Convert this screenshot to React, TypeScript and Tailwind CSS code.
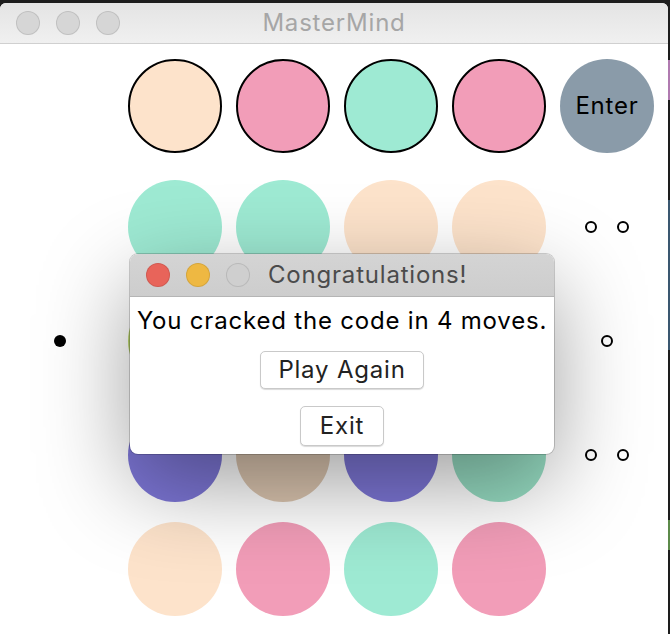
const PEACH = "bg-[#fde3cb]";
const PINK = "bg-[#f29db8]";
const MINT = "bg-[#9eead3]";

type Row = {
  colors: string[];
  pegs: number;
  current?: boolean;
};

const rows: Row[] = [
  { colors: [MINT, MINT, PEACH, PEACH], pegs: 2 },
  { colors: ["bg-[#b9d46c]", PINK, MINT, PEACH], pegs: 1, current: true },
  { colors: ["bg-[#7d76d6]", "bg-[#dcc6b0]", "bg-[#7d76d6]", "bg-[#96dcc2]"], pegs: 2 },
  { colors: [PEACH, PINK, MINT, PINK], pegs: 0 },
];

function TrafficLights({ colors }: { colors: string[] }) {
  return (
    <div className="flex items-center gap-4">
      {colors.map((c, i) => (
        <span
          key={i}
          className={`block w-6 h-6 rounded-full border border-black/10 ${c}`}
        />
      ))}
    </div>
  );
}

function Peg() {
  return <span className="block w-3 h-3 rounded-full border-2 border-black bg-white" />;
}

export default function App() {
  return (
    <div className="relative w-[670px] h-[634px] bg-[#1d1d1d] overflow-hidden font-['Inter','Liberation_Sans',sans-serif] tracking-[0.8px]">
      {/* editor marks behind the window */}
      <div className="absolute right-0 top-[60px] w-[2px] h-[40px] bg-[#b07ab0]" />
      <div className="absolute right-0 top-[200px] w-[2px] h-[150px] bg-[#4f7fa8]/60" />
      <div className="absolute right-0 top-[520px] w-[2px] h-[30px] bg-[#5c8a4a]" />

      <div className="mt-[3px] w-[668px] h-[631px] bg-white rounded-t-[6px] overflow-hidden flex flex-col">
        {/* Title bar */}
        <div className="relative h-[41px] shrink-0 flex items-center px-4 bg-gradient-to-b from-[#e4e4e4] to-[#f0f0f0] border-b border-[#d0d0d0]">
          <TrafficLights colors={["bg-[#d6d6d6]", "bg-[#d6d6d6]", "bg-[#d6d6d6]"]} />
          <div className="absolute inset-0 flex items-center justify-center text-[24px] text-[#a6a6a6]">
            MasterMind
          </div>
        </div>

        {/* Board */}
        <div className="pt-[15px] flex flex-col">
          {/* Guess row */}
          <div className="flex items-center h-[94px]">
            <div className="w-[128px]" />
            <div className="flex gap-[14px]">
              {[PEACH, PINK, MINT, PINK].map((c, i) => (
                <span
                  key={i}
                  className={`block w-[94px] h-[94px] rounded-full border-2 border-black ${c}`}
                />
              ))}
            </div>
            <button
              type="button"
              className="ml-[14px] w-[94px] h-[94px] rounded-full bg-[#8a9ba9] text-[24px] text-black"
            >
              Enter
            </button>
          </div>

          <div className="mt-[27px] flex flex-col gap-[20px]">
            {rows.map((row, r) => (
              <div key={r} className="flex items-center h-[94px]">
                <div className="w-[128px] pl-[54px]">
                  {row.current && <span className="block w-3 h-3 rounded-full bg-black" />}
                </div>
                <div className="flex gap-[14px]">
                  {row.colors.map((c, i) => (
                    <span key={i} className={`block w-[94px] h-[94px] rounded-full ${c}`} />
                  ))}
                </div>
                <div className="ml-[14px] w-[94px] flex justify-center gap-[20px]">
                  {Array.from({ length: row.pegs }, (_, i) => (
                    <Peg key={i} />
                  ))}
                </div>
              </div>
            ))}
          </div>
        </div>
      </div>

      {/* Dialog */}
      <div className="absolute left-[130px] top-[254px] w-[424px] h-[200px] rounded-[8px] bg-white overflow-hidden flex flex-col shadow-[0_0_0_1px_rgba(0,0,0,0.18),0_30px_90px_rgba(0,0,0,0.38)]">
        <div className="relative h-[43px] shrink-0 flex items-center px-4 bg-gradient-to-b from-[#d4d4d4] to-[#cdcdcd] border-b border-[#b5b5b5]">
          <TrafficLights colors={["bg-[#e8645a]", "bg-[#eeb842]", "bg-[#cfcfcf]"]} />
          <div className="absolute inset-y-0 left-[138px] flex items-center text-[24px] text-[#4b4b4b]">
            Congratulations!
          </div>
        </div>
        <div className="flex flex-col items-center">
          <p className="mt-[9px] text-[24px] leading-[30px] text-black whitespace-nowrap">
            You cracked the code in 4 moves.
          </p>
          <button
            type="button"
            className="mt-[15px] w-[164px] h-[38px] rounded-[5px] border border-[#c9c9c9] shadow-[0_1px_1px_rgba(0,0,0,0.15)] bg-white text-[24px] text-[#222]"
          >
            Play Again
          </button>
          <button
            type="button"
            className="mt-[17px] w-[84px] h-[40px] rounded-[5px] border border-[#c9c9c9] shadow-[0_1px_1px_rgba(0,0,0,0.15)] bg-white text-[24px] text-[#222]"
          >
            Exit
          </button>
        </div>
      </div>
    </div>
  );
}
